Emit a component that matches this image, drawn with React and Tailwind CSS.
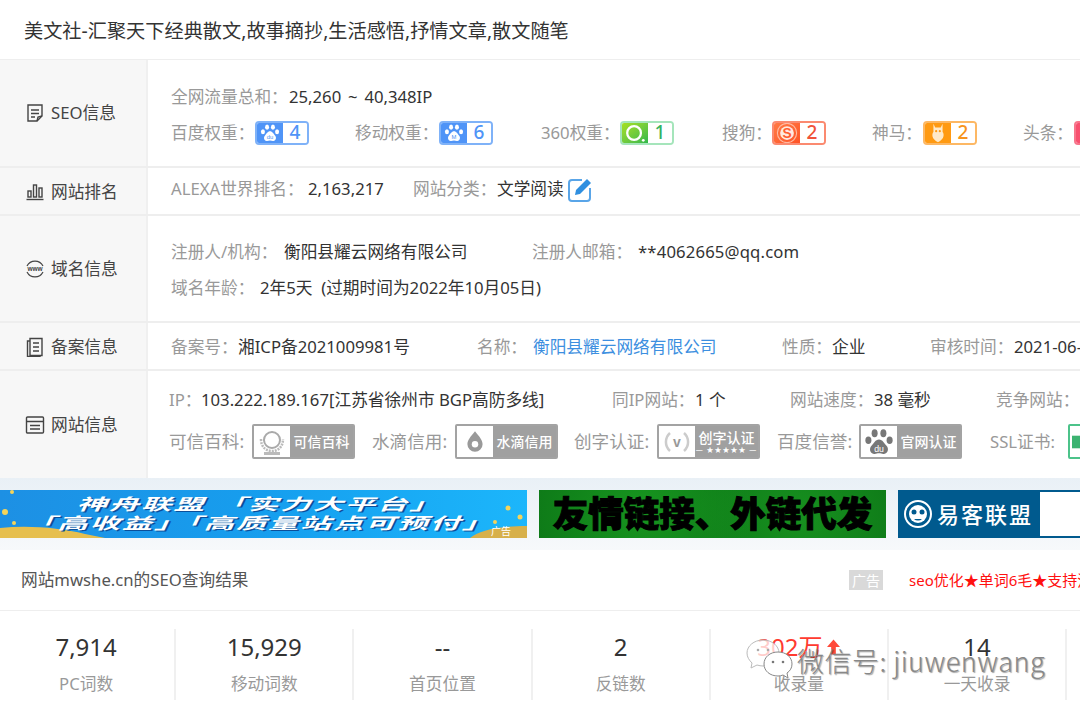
const Paw = ({ fill = "#fff", du = "" }) => (
  <svg viewBox="0 0 24 24" className="h-[20px] w-[20px]">
    <g fill={fill}>
      <ellipse cx="8.500" cy="5" rx="2.400" ry="3.200" />
      <ellipse cx="15.500" cy="5" rx="2.400" ry="3.200" />
      <ellipse cx="3.500" cy="10.500" rx="2.400" ry="3" />
      <ellipse cx="20.500" cy="10.500" rx="2.400" ry="3" />
      <path d="M12 10c-3 0-4 3-6 5-2 2-1.500 6 2 6.500 1.500.2 2.500-.5 4-.5s2.500.7 4 .5c3.500-.5 4-4.500 2-6.500-2-2-3-5-6-5z" />
    </g>
    {du && <text x="12" y="19.500" textAnchor="middle" fontSize="7" fill="#4b8ff0" fontFamily="Liberation Sans">{du}</text>}
  </svg>
);

const Badge = ({ border, left, num, numColor, children }) => (
  <span className={`flex h-[24px] w-[54px] shrink-0 overflow-hidden rounded-[4px] border-2 ${border}`}>
    <span className={`flex w-[26px] shrink-0 items-center justify-center ${left}`}>{children}</span>
    <span className={`flex flex-1 items-center justify-center bg-white text-[19px] font-medium leading-none ${numColor}`}>{num}</span>
  </span>
);

const V = ({ children }) => <span className="text-[#333]">{children}</span>;

const Side = ({ icon, children, cn = "" }) => (
  <div className={`flex w-[148px] shrink-0 items-center gap-[6px] border-r-2 border-[#f0f0f0] bg-[#f7f7f7] pl-[25px] text-[#444] ${cn}`}>
    {icon}
    <span>{children}</span>
  </div>
);

const Ico = ({ children }) => (
  <svg viewBox="0 0 20 20" className="h-[20px] w-[20px] shrink-0" fill="none" stroke="#444" strokeWidth="1.400">
    {children}
  </svg>
);

const Cert = ({ icon, children, sub }) => (
  <span className="flex h-[35px] w-[103px] shrink-0 overflow-hidden rounded-[2px] border-2 border-[#a3a3a3]">
    <span className="flex w-[36px] shrink-0 items-center justify-center bg-white">{icon}</span>
    <span className="flex flex-1 flex-col items-center justify-center bg-[#a0a0a0] text-[14px] font-medium leading-[16px] text-white">
      {children}
      {sub && <span className="text-[7px] leading-[8px] tracking-[1px]">— ★★★★★ —</span>}
    </span>
  </span>
);

const Stat = ({ value, label, red, last }) => (
  <div className={`flex h-[71px] w-[178.2px] shrink-0 flex-col items-center ${last ? "" : "border-r-2 border-[#f0f0f0]"}`}>
    <div className={`-mt-[1px] flex items-center text-[24px] leading-[38px] ${red ? "text-[#ff3b30]" : "text-[#333]"}`}>
      {value}
      {red && (
        <svg viewBox="0 0 14 16" className="ml-[5px] h-[16px] w-[13px]">
          <path d="M7 0l7 8H9.500v8h-5V8H0z" fill="#ff4a3a" />
        </svg>
      )}
    </div>
    <div className="mt-[7px] leading-[22px] text-[#999]">{label}</div>
  </div>
);

export default function App() {
  return (
    <div className="relative h-[712px] w-[1080px] overflow-hidden bg-white font-['Noto_Sans','Noto_Sans_CJK_SC',sans-serif] text-[16.7px]">
      <div className="flex h-[60px] items-center whitespace-nowrap border-b border-[#eee] pl-[24px] pt-[3px] text-[19.2px] text-[#333]">
        美文社-汇聚天下经典散文,故事摘抄,生活感悟,抒情文章,散文随笔
      </div>

      <div className="flex h-[108px] border-b-2 border-[#eee]">
        <Side icon={<Ico><path d="M3 2h14v11l-5 5H3z" /><path d="M6 7h8M6 10.500h8M6 14h4M12 18l1-4 4-1" /></Ico>}>SEO信息</Side>
        <div className="flex flex-col gap-[11px] whitespace-nowrap pl-[23px] pt-[24px]">
          <div className="flex h-[25px] items-center"><span className="w-[118px] text-[#999]">全网流量总和：</span><span className="text-[#333] [word-spacing:2.500px]">25,260 ~ 40,348IP</span></div>
          <div className="flex h-[25px] items-center gap-[46px]">
            <div className="flex items-center"><span className="w-[84px] text-[#999]">百度权重：</span>
              <Badge border="border-[#7fb2f8]" left="bg-[#4f94f7]" num="4" numColor="text-[#4f94f7]"><Paw du="du" /></Badge></div>
            <div className="flex items-center"><span className="w-[84px] text-[#999]">移动权重：</span>
              <Badge border="border-[#7fb2f8]" left="bg-[#4f94f7]" num="6" numColor="text-[#4f94f7]"><Paw du="M" /></Badge></div>
            <div className="ml-[2px] flex items-center"><span className="w-[79px] text-[#999]">360权重：</span>
              <Badge border="border-[#a5e5bb]" left="bg-gradient-to-br from-[#a4e01c] to-[#2cb84a]" num="1" numColor="text-[#37b35f]">
                <svg viewBox="0 0 24 24" className="h-[22px] w-[22px]"><circle cx="11" cy="12" r="7.500" fill="none" stroke="#fff" strokeWidth="2.500" /><circle cx="21" cy="20" r="1.500" fill="#fff" /></svg>
              </Badge></div>
            <div className="ml-[2px] flex items-center"><span className="w-[50px] text-[#999]">搜狗：</span>
              <Badge border="border-[#fb8a70]" left="bg-gradient-to-br from-[#ff7a45] to-[#ff5225]" num="2" numColor="text-[#f0533a]">
                <svg viewBox="0 0 24 24" className="h-[22px] w-[22px]"><circle cx="12" cy="12" r="10.500" fill="none" stroke="#ffb9a2" strokeWidth="1.200" /><circle cx="12" cy="12" r="7.500" fill="#ffe9e0" /><text x="12" y="17" textAnchor="middle" fontSize="15" fontWeight="700" fill="#ff5f30" fontFamily="Liberation Sans">S</text></svg>
              </Badge></div>
            <div className="flex items-center"><span className="w-[51px] text-[#999]">神马：</span>
              <Badge border="border-[#fdb864]" left="bg-[#ff9a12]" num="2" numColor="text-[#f7941d]">
                <svg viewBox="0 0 24 24" className="h-[22px] w-[22px]" fill="#ffe9c8"><path d="M7 2l2 4h6l2-4v9c2 2 2 8-5 11-7-3-7-9-5-11z" /><circle cx="10" cy="10" r="1.200" fill="#ff9a12" /><circle cx="14" cy="10" r="1.200" fill="#ff9a12" /></svg>
              </Badge></div>
            <div className="flex items-center"><span className="w-[51px] text-[#999]">头条：</span>
              <Badge border="border-[#f8768c]" left="bg-[#f8506f]" num="" numColor="text-[#f8506f]"><span className="h-[10px] w-[10px] bg-white" /></Badge></div>
          </div>
        </div>
      </div>

      <div className="flex h-[48px] border-b-2 border-[#eee]">
        <Side cn="pt-[2px]" icon={<Ico><path d="M1.500 17.500h17" /><rect x="3" y="9" width="3" height="6" /><rect x="8.500" y="3" width="3" height="12" /><rect x="14" y="6" width="3" height="9" /></Ico>}>网站排名</Side>
        <div className="flex items-center whitespace-nowrap pb-[5px] pl-[23px]">
          <span className="w-[137px] text-[#999]">ALEXA世界排名：</span><span className="w-[105px] text-[#333]">2,163,217</span>
          <span className="w-[84px] text-[#999]">网站分类：</span><V>文学阅读</V>
          <svg viewBox="0 0 26 26" className="ml-[4px] h-[26px] w-[26px]"><path d="M14 4H4a3 3 0 0 0-3 3v15a3 3 0 0 0 3 3h15a3 3 0 0 0 3-3V12" fill="none" stroke="#59a5e8" strokeWidth="2" /><path d="M8 14L19 3l4 4-11 11-5 1z" fill="#2f8fe0" /></svg>
        </div>
      </div>

      <div className="flex h-[107px] border-b-2 border-[#eee]">
        <Side icon={<svg viewBox="0 0 20 20" className="h-[20px] w-[20px] shrink-0"><path d="M2 7a9 9 0 0 1 16 0M2 13a9 9 0 0 0 16 0" fill="none" stroke="#444" strokeWidth="1.200" /><text x="10" y="12" textAnchor="middle" fontSize="6.500" fontWeight="700" fill="#444" fontFamily="Liberation Sans">www</text></svg>}>域名信息</Side>
        <div className="flex flex-col gap-[11px] whitespace-nowrap pl-[23px] pt-[23px]">
          <div className="flex h-[25px] items-center">
            <span className="w-[113px] text-[#999]">注册人/机构：</span><span className="w-[248px] text-[#333]">衡阳县耀云网络有限公司</span>
            <span className="w-[106px] text-[#999]">注册人邮箱：</span><span className="tracking-[0.15px] text-[#333]">**4062665@qq.com</span>
          </div>
          <div className="flex h-[25px] items-center">
            <span className="w-[89px] text-[#999]">域名年龄：</span><V>2年5天&nbsp;&nbsp;(过期时间为2022年10月05日)</V>
          </div>
        </div>
      </div>

      <div className="flex h-[48px] border-b-2 border-[#eee]">
        <Side cn="pt-[2px]" icon={<Ico><path d="M5 1.500h12v17H5z" /><path d="M5 4H2.500v15.500H15V18.500" /><path d="M8 6h6M8 10h6M8 14h6" /></Ico>}>备案信息</Side>
        <div className="flex items-center whitespace-nowrap pt-[2px] pl-[23px]">
          <span className="w-[67px] text-[#999]">备案号：</span><span className="w-[239px] text-[#333]">湘ICP备2021009981号</span>
          <span className="w-[56px] text-[#999]">名称：</span><span className="w-[249px] text-[#3d8fe0]">衡阳县耀云网络有限公司</span>
          <span className="w-[50px] text-[#999]">性质：</span><span className="w-[98px] text-[#333]">企业</span>
          <span className="w-[84px] text-[#999]">审核时间：</span><V>2021-06-11</V>
        </div>
      </div>

      <div className="flex h-[107px]">
        <Side icon={<Ico><rect x="1.500" y="2" width="17" height="16" rx="1" /><path d="M1.500 6.500h17M5 10.500h10M5 14h10" /></Ico>}>网站信息</Side>
        <div className="flex flex-col gap-[12px] whitespace-nowrap pl-[21px] pt-[16px]">
          <div className="flex h-[25px] items-center">
            <span className="w-[32px] text-[#999]">IP：</span><span className="w-[411px] text-[#333]">103.222.189.167[江苏省徐州市 BGP高防多线]</span>
            <span className="w-[83px] text-[#999]">同IP网站：</span><span className="w-[95px] text-[#333]">1 个</span>
            <span className="w-[84px] text-[#999]">网站速度：</span><span className="w-[122px] text-[#333]">38 毫秒</span>
            <span className="text-[#999]">竞争网站：</span>
          </div>
          <div className="flex h-[35px] items-center text-[17.6px]">
            <span className="w-[83px] text-[#999]">可信百科:</span>
            <Cert icon={<svg viewBox="0 0 30 30" className="h-[30px] w-[30px]"><circle cx="15" cy="13" r="8" fill="none" stroke="#aaa" strokeWidth="2" /><path d="M4 12c0 8 5 12 11 12s11-4 11-12" fill="none" stroke="#bbb" strokeWidth="2.500" strokeDasharray="2 1" /><rect x="7" y="25" width="16" height="3" fill="#bbb" /></svg>}>可信百科</Cert>
            <span className="ml-[17px] w-[83px] text-[#999]">水滴信用:</span>
            <Cert icon={<svg viewBox="0 0 24 24" className="h-[26px] w-[26px]"><path d="M12 2c4 5 7 8 7 12a7 7 0 0 1-14 0c0-4 3-7 7-12z" fill="#999" /><circle cx="12" cy="14" r="3" fill="#fff" /></svg>}>水滴信用</Cert>
            <span className="ml-[16px] w-[83px] text-[#999]">创字认证:</span>
            <Cert sub icon={<svg viewBox="0 0 30 30" className="h-[30px] w-[30px]"><path d="M8 6a12 12 0 0 0 0 18M22 6a12 12 0 0 1 0 18" fill="none" stroke="#ccc" strokeWidth="2.500" /><text x="15" y="20" textAnchor="middle" fontSize="14" fontWeight="700" fill="#999" fontFamily="Liberation Sans">v</text></svg>}>创字认证</Cert>
            <span className="ml-[17px] w-[82px] text-[#999]">百度信誉:</span>
            <Cert icon={<svg viewBox="0 0 24 24" className="h-[30px] w-[30px]"><g fill="#777"><ellipse cx="8.500" cy="5" rx="2.400" ry="3.200" /><ellipse cx="15.500" cy="5" rx="2.400" ry="3.200" /><ellipse cx="3.500" cy="10.500" rx="2.400" ry="3" /><ellipse cx="20.500" cy="10.500" rx="2.400" ry="3" /><path d="M12 10c-3 0-4 3-6 5-2 2-1.500 6 2 6.500 1.500.2 2.500-.5 4-.5s2.500.7 4 .5c3.500-.5 4-4.500 2-6.500-2-2-3-5-6-5z" /></g><text x="12" y="20" textAnchor="middle" fontSize="7" fill="#fff" fontFamily="Liberation Sans">du</text></svg>}>官网认证</Cert>
            <span className="ml-[28px] w-[78px] text-[16.7px] text-[#999]">SSL证书:</span>
            <span className="flex h-[35px] w-[40px] shrink-0 items-center rounded-[2px] border-2 border-[#4cc38a] bg-white pl-[2px]">
              <svg viewBox="0 0 10 20" className="h-[20px] w-[9px]"><path d="M0 3h10v14H0z" fill="#3cb371" /></svg>
            </span>
          </div>
        </div>
      </div>

      <div className="flex h-[72px] gap-[12px] whitespace-nowrap bg-gradient-to-b from-[#e9f0f6] to-[#f7f9fb] py-[12px]">
        <div className="relative flex w-[527px] shrink-0 flex-col items-center justify-center overflow-hidden bg-gradient-to-r from-[#1d90e4] via-[#169eee] to-[#1cb6fb] pr-[8px]">
          <svg viewBox="0 0 527 48" className="absolute inset-0 h-[48px] w-[527px]">
            <path d="M0 38c30-3 60 0 85 6l20 4H0z" fill="#e6bf4e" />
            <path d="M470 48c10-8 30-12 57-12v12z" fill="#d7b04a" />
            <g fill="#f5d45a">
              <circle cx="5" cy="22" r="3" /><circle cx="14" cy="33" r="2" /><circle cx="12" cy="2" r="2" />
              <circle cx="508" cy="18" r="2.500" /><circle cx="520" cy="27" r="2.500" /><circle cx="495" cy="32" r="2" />
            </g>
          </svg>
          <div className="relative scale-x-[1.9] text-[16px] font-bold italic leading-[19px] tracking-[1px] text-white [text-shadow:1px_1px_0_#0b4f9a]">神舟联盟&nbsp;「实力大平台」</div>
          <div className="relative scale-x-[1.9] text-[16px] font-bold italic leading-[19px] tracking-[1px] text-white [text-shadow:1px_1px_0_#0b4f9a]">「高收益」「高质量站点可预付」</div>
          <span className="absolute bottom-0 right-[16px] text-[10px] leading-[14px] text-white">广告</span>
        </div>
        <div className="flex w-[347px] shrink-0 items-center justify-center bg-[#0e7a18] bg-[radial-gradient(circle_at_30%_40%,#17951f,transparent_45%),radial-gradient(circle_at_75%_60%,#17901f,transparent_40%)] text-[35.5px] font-black leading-none text-black [-webkit-text-stroke:1px_black]">
          友情链接、外链代发
        </div>
        <div className="flex w-[300px] shrink-0 items-center bg-[#005a8e] pl-[5px]">
          <svg viewBox="0 0 30 30" className="h-[30px] w-[30px] shrink-0"><circle cx="15" cy="15" r="13" fill="none" stroke="#fff" strokeWidth="2" /><circle cx="15" cy="15" r="9" fill="#fff" /><circle cx="11" cy="13" r="2.500" fill="#005a8e" /><circle cx="19" cy="13" r="2.500" fill="#005a8e" /><path d="M11 20a5 4 0 0 0 8 0z" fill="#005a8e" /></svg>
          <span className="ml-[4px] text-[22px] font-medium leading-none tracking-[2px] text-white">易客联盟</span>
          <span className="ml-[7px] h-[44px] flex-1 bg-white" />
        </div>
      </div>

      <div className="flex h-[61px] items-center whitespace-nowrap border-b border-[#eee] pl-[21px]">
        <span className="w-[828px] shrink-0 text-[#555]">网站mwshe.cn的SEO查询结果</span>
        <span className="flex h-[20px] w-[34px] shrink-0 items-center justify-center bg-[#d9d9d9] text-[14px] text-white">广告</span>
        <span className="ml-[26px] text-[15px] text-[#ff1010]">seo优化★单词6毛★支持流量</span>
      </div>

      <div className="-ml-[2px] flex pt-[18px]">
        <Stat value="7,914" label="PC词数" />
        <Stat value="15,929" label="移动词数" />
        <Stat value="--" label="首页位置" />
        <Stat value="2" label="反链数" />
        <Stat value="302万" label="收录量" red />
        <Stat value="14" label="一天收录" />
        <Stat value="" label="" last />
      </div>

      <div className="absolute left-[745px] top-[641px] flex items-center">
        <svg viewBox="0 0 50 42" className="-mt-[3px] h-[42px] w-[50px]">
          <path d="M18 2C9 2 2 8 2 15c0 4 2 7 5 10l-1 5 6-3c2 .6 4 1 6 1 9 0 16-6 16-13S27 2 18 2z" fill="#fff" fillOpacity="0.75" stroke="#bbb" />
          <path d="M33 14c-8 0-14 5-14 12s6 12 14 12c2 0 3-.3 5-1l5 3-1-5c3-2 5-5 5-9 0-7-6-12-14-12z" fill="#fff" stroke="#888" />
          <circle cx="28" cy="24" r="1.300" fill="#777" /><circle cx="38" cy="24" r="1.300" fill="#777" />
          <circle cx="13" cy="12" r="1.300" fill="#aaa" /><circle cx="23" cy="12" r="1.300" fill="#aaa" />
        </svg>
        <span className="ml-[2px] whitespace-nowrap font-['Noto_Sans_CJK_SC','Noto_Sans',sans-serif] text-[27px] font-light leading-none tracking-[0.5px] text-[#888] [text-shadow:1px_1px_1px_rgba(0,0,0,0.35)]">微信号: jiuwenwang</span>
      </div>
    </div>
  );
}
